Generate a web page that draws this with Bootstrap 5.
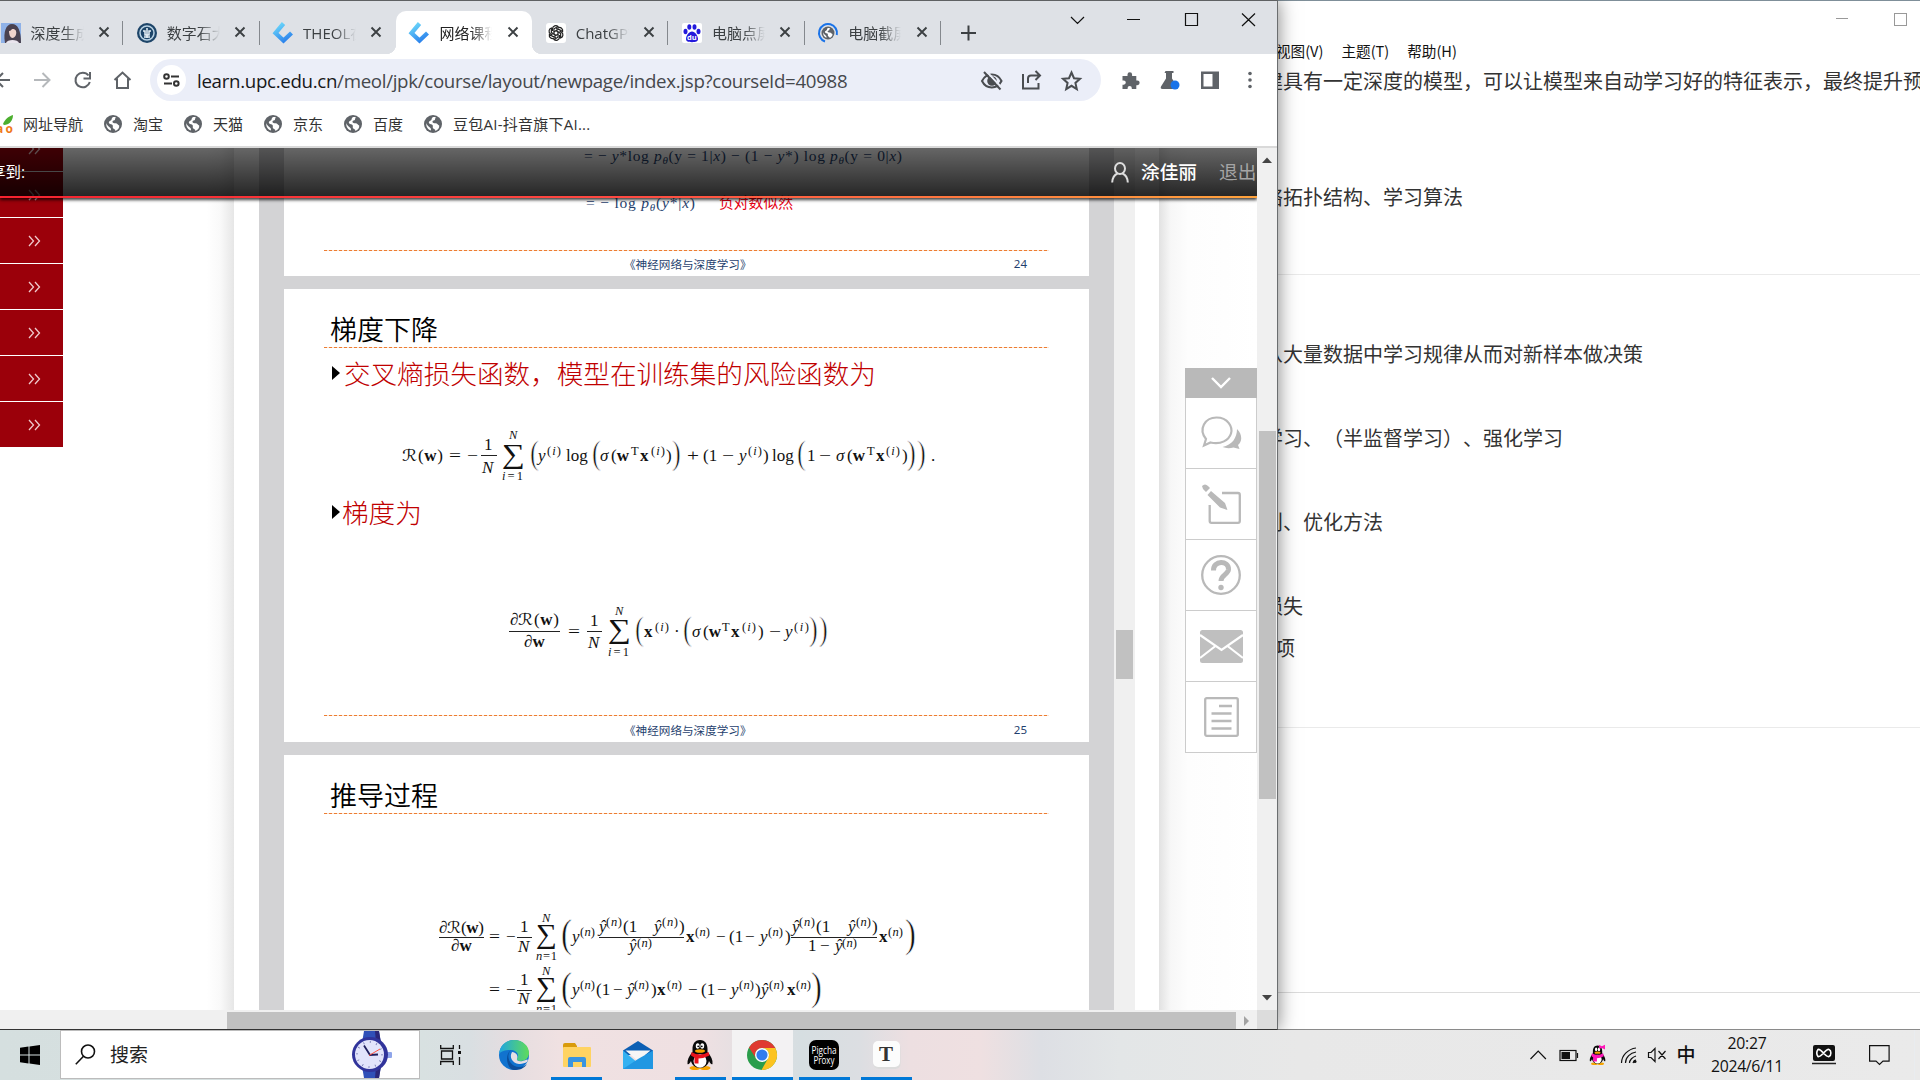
<!DOCTYPE html>
<html lang="zh-CN">
<head>
<meta charset="utf-8">
<title>网络课程</title>
<link href="https://cdn.jsdelivr.net/npm/bootstrap@5.3.0/dist/css/bootstrap.min.css" rel="stylesheet">
<style>
html,body{width:1920px;height:1080px;overflow:hidden}
body{font-family:"Open Sans","Noto Sans CJK SC",sans-serif;background:#fff;color:#333;line-height:1.2}
svg{display:block;flex:none;overflow:visible}
.desk{width:1920px;height:1030px}
/* editor window behind */
.editor{left:1262px;top:0;width:658px;height:1030px;border-top:1px solid #7f8f99;border-bottom:1px solid #8a8a8a;background:#fff}
.ed-bar{height:35px;padding:12px 13px 0 0;gap:46px}
.ed-menu{height:30px;padding-left:14px;gap:18px;font-size:14.6px;color:#111;line-height:30px;font-family:"Noto Sans CJK SC",sans-serif}
.ed-body{font:20px/30px "Noto Sans CJK SC",sans-serif;color:#333;white-space:nowrap;padding-left:1px;text-spacing-trim:space-all}
.ed-body p{margin:0 0 54px;height:30px}
.ed-rule{height:1px;background:#eaeaea}
/* browser */
.browser{left:-20px;top:0;width:1298px;height:1030px;border-top:1px solid #5f6163;border-right:1px solid #6b6e70;border-bottom:1px solid #333;background:#fff;box-shadow:0 0 18px rgba(0,0,0,.5)}
.strip{height:53px;background:#dee1e6;padding-left:7px}
.tb{width:136.3px;height:43px;padding:0 12.5px 0 13.5px;position:relative;margin-top:10px;color:#3c4043;font-size:15px}
.tb:not(.on):not(.pre)::after{content:"";position:absolute;right:0;top:10px;width:1px;height:24px;background:#84888d}
.tb.on{background:#fff;border-radius:10px 10px 0 0;color:#222}
.tb.on::before,.tb.on::after{content:"";position:absolute;bottom:0;width:10px;height:10px}
.tb.on::before{left:-10px;background:radial-gradient(circle at 0 0,transparent 10px,#fff 10.5px)}
.tb.on::after{right:-10px;background:radial-gradient(circle at 100% 0,transparent 10px,#fff 10.5px)}
.ttl{width:53px;margin-left:10px;white-space:nowrap;overflow:hidden;-webkit-mask-image:linear-gradient(90deg,#000 60%,transparent)}
.tools{height:47px;padding:5px 0 0 20px}
.omni{width:951px;height:42px;border-radius:21px;background:#ebeef8;padding:0 20px 0 7px}
.info{width:29px;height:30px;border-radius:50%;background:#fff}
.url{font:18.7px "Open Sans",sans-serif;letter-spacing:-.31px;color:#45484c;margin-left:11px;white-space:nowrap}
.url b{font-weight:400;color:#17181a}
.marks{height:47px;border-bottom:2px solid #d9d9d9;padding-left:20px;font-size:15px;color:#333;white-space:nowrap}
.marks>div{gap:11px}
/* page */
.pageport{height:862px;margin-left:20px}
.web{width:1257px;height:862px;overflow:hidden;position:relative}
.side{width:63px;margin-top:-22px}
.side div{height:46px;background:#9b000a;border-bottom:1px solid #fff;padding-left:28px}
.side div:last-child{height:45px;border:0}
.gapl{width:171px;background:linear-gradient(90deg,#fff 84%,#f9f9f9 92%,#e6e6e6)}
.gapr{width:98px;background:linear-gradient(90deg,#e2e2e2,#f7f7f7 12%,#fdfdfd 30%,#fff)}
.pdf{width:855px;background:#d3d3d5;padding:0 25px;gap:13px}
.slide{width:805px;background:#fff;flex:none;overflow:hidden}
.dash{height:2px;margin:0 40px;background:repeating-linear-gradient(90deg,#ed7d31 0 3px,#fbe3d3 3px 5px) 0 0/100% 1px no-repeat}
.foot{font:11.6px/16px "Noto Sans CJK SC",sans-serif;color:#1f3f6e;padding:0 62px 0 340px;font-weight:400}
.foot span:last-child{font:11.5px/16px "Noto Sans",sans-serif}
.h-t{font:350 27px/36px "Noto Sans CJK SC",sans-serif;color:#000;margin-left:46px;height:36px}
.bl{font:300 26.6px/32px "Noto Sans CJK SC",sans-serif;color:#c00000;margin-left:48px;gap:4px;height:32px}
.tri{width:0;height:0;border:7px solid transparent;border-left:8px solid #000;border-right:0}
.eq{fill:#111;font-family:"Liberation Serif",serif;font-size:17px}
.eq .i{font-style:italic}.eq .b{font-weight:700}.eq .s{font-size:12.5px}.eq .si{font-size:12.5px;font-style:italic}
.eq .S{font-size:27px}.eq .P{font-size:33px}.eq .Q{font-size:41px}.eq .R{font-family:"DejaVu Sans",sans-serif;font-size:16px}
.eq .P,.eq .Q{stroke:#fff;stroke-width:.7}
.eq line{stroke:#222;stroke-width:1}
.hdr{left:0;top:0;width:1257px;height:50px;background:linear-gradient(rgba(0,0,0,.6),rgba(0,0,0,.86));box-shadow:0 2px 3px rgba(0,0,0,.75);color:#fff}
.hdr::after{content:"";position:absolute;left:0;bottom:0;width:100%;height:2px;background:linear-gradient(90deg,#f5222f,#ff4a42 50%,#ffa33c)}
.scr{background:#f0f0f0}
.wid{right:0;top:220px;width:72px}
.wid .top{height:30px;background:#b9b9b9}
.wid .cl{height:71px;background:#fff;border:1px solid #ccc;border-top:0}
.hs{height:19px;background:#f0f0f0;margin-left:20px}
.hs i{display:block;width:1009px;height:17px;margin-left:227px;background:#c1c1c1}
/* taskbar */
.task{height:50px;background:linear-gradient(90deg,#d5dfdf 0,#d8e1e1 420px,#d9dfe2 470px,#e5dde0 510px,#f0e1e2 560px,#efe0e2 700px,#e0dfe2 760px,#d6dee1 800px,#dcdee2 860px,#eddfe1 910px,#efe0e1 980px,#dddfe4 1040px,#e3e6e7 1120px,#e8e8e8 1300px,#eaeaea 100%)}
.find{width:360px;height:49px;margin-left:20px;background:#fff;border:1px solid #bcbcbc;padding-left:14px;font-size:19px;color:#222}
.ap{height:50px;position:relative;flex:none}
.ap.run::after{content:"";position:absolute;left:0;right:0;bottom:0;height:3px;background:#0078d7}
.clock{font-size:15.8px;line-height:23px;color:#111;width:76px;text-align:center;letter-spacing:-.3px}
</style>
<script src="https://cdn.jsdelivr.net/npm/bootstrap@5.3.0/dist/js/bootstrap.bundle.min.js"></script>
</head>
<body>
<svg width="0" height="0" class="position-absolute"><defs>
<linearGradient id="th" gradientUnits="userSpaceOnUse" x1="4" y1="0" x2="15" y2="20"><stop offset="0" stop-color="#6fdcfb"/><stop offset="1" stop-color="#2478ea"/></linearGradient>
<g id="x"><path d="M-4.5-4.5 4.5 4.5M4.5-4.5-4.5 4.5" stroke="#3c4043" stroke-width="1.9"/></g>
<g id="globe"><circle cx="9" cy="9" r="9" fill="#5f6368"/><path d="M9 2.2c-2 .9-.7 2.600-2.300 3.300S4.500 7 5 8.200s3.200.5 3.700 2-.5 2.300.6 3.200 2.300 1 2 2.500c2.700-.7 4.300-3.300 3.900-5.400-1.200-.3-1.900-2.200-3.500-2.200S8.300 8 8.500 6.500s2.700-.8 2.500-2S12 2.600 12.600 2.800 10.300 1.600 9 2.200zM2.300 8c-.5 3.500 1.700 6.600 4.600 7.500.3-1.800-.4-2.700-1.600-3.500S2.600 9.500 2.300 8z" fill="#fff"/></g>
<g id="theol"><path d="M10.500.5 2.500 10 10.500 17.500 18.500 10" fill="none" stroke="url(#th)" stroke-width="4.300"/></g>
<g id="dc"><path d="M1 1l4.500 5L1 11M7 1l4.500 5L7 11" fill="none" stroke="#efc9cc" stroke-width="1.300"/></g>
<g id="qq"><ellipse cx="8" cy="28" rx="5.500" ry="2" fill="#f5a400"/><ellipse cx="18" cy="28" rx="5.500" ry="2" fill="#f5a400"/><path d="M13 0C7.500 0 5.500 4.500 5.500 9v3C2 16 0 20 .5 24c1 1 2.500-1 3.500-3 .8 4 4.500 7 9 7s8.200-3 9-7c1 2 2.500 4 3.500 3 .5-4-1.500-8-5-12V9c0-4.500-2-9-7.500-9z" fill="#0a0a0a"/><ellipse cx="13" cy="21" rx="6.500" ry="6.800" fill="#fff"/><ellipse cx="10.700" cy="6" rx="1.900" ry="2.800" fill="#fff"/><ellipse cx="15.300" cy="6" rx="1.900" ry="2.800" fill="#fff"/><circle cx="11.200" cy="6.300" r=".9"/><circle cx="14.800" cy="6.300" r=".9"/><ellipse cx="13" cy="11" rx="5" ry="1.800" fill="#f5a400"/></g>
</defs></svg>

<div class="desk position-relative overflow-hidden">
  <section class="editor position-absolute">
    <div class="ed-bar d-flex justify-content-end">
      <svg width="12" height="12"><path d="M0 5.500H12" stroke="#999"/></svg>
      <svg width="13" height="13"><rect x=".5" y=".5" width="12" height="12" fill="none" stroke="#999"/></svg>
    </div>
    <div class="ed-menu d-flex"><span>视图(V)</span><span>主题(T)</span><span>帮助(H)</span></div>
    <div class="ed-body">
      <p style="margin-bottom:86px">建具有一定深度的模型，可以让模型来自动学习好的特征表示，最终提升预测</p>
      <p style="margin-bottom:62px">络拓扑结构、学习算法</p>
      <div class="ed-rule"></div>
      <p style="margin-top:64px">从大量数据中学习规律从而对新样本做决策</p>
      <p>学习、（半监督学习）、强化学习</p>
      <p>则、优化方法</p>
      <p style="margin-bottom:12px">损失</p>
      <p style="margin:0 0 64px 12px">项</p>
      <div class="ed-rule"></div>
      <div class="ed-rule" style="margin-top:264px;background:#dcdcdc"></div>
    </div>
  </section>

  <section class="browser position-absolute">
    <div class="strip d-flex">
      <div class="tb d-flex align-items-center"><svg width="20" height="20"><rect width="20" height="20" fill="#8fb2e8"/><path d="M4 20C2 9 5 1 11 1s9 7 9 19z" fill="#4a4250"/><path d="M8 8c0-2 6-3 7 0s-1 7-3.500 7S8 11 8 8z" fill="#f0d3cb"/><path d="M5 20c1-4 12-4 13 0z" fill="#e9e5ee"/><path d="M8 8c2 0 3-2 4-4 1 2 3 2 4 5V3H8z" fill="#4a4250"/></svg><span class="ttl">深度生成</span><svg width="1" height="1" class="ms-auto"><use href="#x" x="-6"/></svg></div>
      <div class="tb d-flex align-items-center"><svg width="20" height="20"><circle cx="10" cy="10" r="10" fill="#1d4569"/><circle cx="10" cy="10" r="7" fill="none" stroke="#b9d2e4" stroke-width="1.500"/><path d="M6 8h2v4h4V8h2M10 5v10M7 14h6" stroke="#e9f2f8" fill="none" stroke-width="1.500"/></svg><span class="ttl">数字石大</span><svg width="1" height="1" class="ms-auto"><use href="#x" x="-6"/></svg></div>
      <div class="tb pre d-flex align-items-center"><svg width="20" height="20"><use href="#theol"/></svg><span class="ttl">THEOL在</span><svg width="1" height="1" class="ms-auto"><use href="#x" x="-6"/></svg></div>
      <div class="tb on d-flex align-items-center"><svg width="20" height="20"><use href="#theol"/></svg><span class="ttl">网络课程</span><svg width="1" height="1" class="ms-auto"><use href="#x" x="-6"/></svg></div>
      <div class="tb d-flex align-items-center"><svg width="20" height="20" viewBox="-10 -10 20 20"><rect x="-10" y="-10" width="20" height="20" rx="3" fill="#fff"/><g fill="none" stroke="#222" stroke-width="1.200"><g id="pt"><path d="M-3.500-2V-4.500a3.300 3.300 0 0 1 5.500-2L-2-4.200V1.500"/></g><use href="#pt" transform="rotate(60)"/><use href="#pt" transform="rotate(120)"/><use href="#pt" transform="rotate(180)"/><use href="#pt" transform="rotate(240)"/><use href="#pt" transform="rotate(300)"/></g></svg><span class="ttl">ChatGPT</span><svg width="1" height="1" class="ms-auto"><use href="#x" x="-6"/></svg></div>
      <div class="tb d-flex align-items-center"><svg width="20" height="20"><rect width="20" height="20" rx="2" fill="#fff"/><g fill="#2319dc"><ellipse cx="3.500" cy="8.500" rx="2" ry="2.800"/><ellipse cx="7.300" cy="4" rx="2" ry="2.800"/><ellipse cx="12.500" cy="4" rx="2" ry="2.800"/><ellipse cx="16.500" cy="8.500" rx="2" ry="2.800"/><path d="M10 8.500c3 0 6 4.500 6 7.300s-2 3.400-6 3.400-6-.6-6-3.400 3-7.300 6-7.300z"/></g><text x="5" y="17" font-size="7.500" font-weight="700" fill="#fff">du</text></svg><span class="ttl">电脑点屏</span><svg width="1" height="1" class="ms-auto"><use href="#x" x="-6"/></svg></div>
      <div class="tb d-flex align-items-center"><svg width="20" height="20"><g transform="translate(3.500 3.500) scale(.72)"><use href="#globe"/></g><path d="M7 18.500A9 9 0 1 1 18.800 12" fill="none" stroke="#1a73e8" stroke-width="2"/></svg><span class="ttl">电脑截屏</span><svg width="1" height="1" class="ms-auto"><use href="#x" x="-6"/></svg></div>
      <svg width="320" height="53" viewBox="941 1 320 53" fill="none" stroke="#111"><path d="M961 33h15M968.500 25.500v15" stroke="#3c4043" stroke-width="2"/><path d="M1071 17l6.500 6.500 6.500-6.500M1127 19.500h13M1185.500 13.500h12v12h-12zM1242 13.500l13 12.500M1255 13.500l-13 12.500" stroke-width="1.200"/></svg>
    </div>
    <div class="tools d-flex">
      <svg width="150" height="42" viewBox="0 59 150 42" fill="none" stroke="#5f6368" stroke-width="2"><path d="M10 80H-4M3 73l-7 7 7 7"/><path d="M34 80h15M42.500 73l7 7-7 7" stroke="#b5b8bb"/><path d="M88.500 75.500a7.300 7.300 0 1 0 1.300 6.500M90 72v6.500h-6.500"/><path d="M114.500 80l8-7.500 8 7.500M117 78.500v9.500h11v-9.500"/></svg>
      <div class="omni d-flex align-items-center">
        <div class="info d-flex align-items-center justify-content-center"><svg width="17" height="14" fill="none" stroke="#333" stroke-width="2"><circle cx="3.500" cy="3.500" r="2.300"/><path d="M8 3.500h8M1 10.500h8"/><circle cx="13.300" cy="10.500" r="2.300"/></svg></div>
        <div class="url"><b>learn.upc.edu.cn</b>/meol/jpk/course/layout/newpage/index.jsp?courseId=40988</div>
        <svg class="ms-auto" width="101" height="24" viewBox="981 68 101 24" fill="none" stroke="#4a4d51" stroke-width="2"><path d="M983 81c2-4 5.500-6.500 9.800-6.500s7.800 2.500 9.700 6.500c-2 4-5.500 6.500-9.700 6.500S985 85 983 81z"/><circle cx="993" cy="81" r="3.800" fill="#4a4d51"/><path d="M987.500 71.500L1003 88" stroke="#ebeef8" stroke-width="2"/><path d="M985 72l16.500 17.500"/><path d="M1024 74v14.500h15.500V83M1029 83v-4.500q0-3 3-3h7.500M1036.500 71l4.500 4.500-4.500 4.500"/><path d="M1072.500 72.500l2.500 5.700 6 .6-4.600 4.100 1.400 6.200-5.300-3.300-5.300 3.300 1.400-6.200-4.600-4.100 6-.6z"/></svg>
      </div>
      <svg width="150" height="42" viewBox="1105 59 150 42" class="ms-1" fill="#5f6368"><path d="M1123 76h4.500v-1.500a2.300 2.300 0 0 1 4.600 0V76h4.200v4.500h1a2.300 2.300 0 0 1 0 4.700h-1V89h-4.500v-1a2 2 0 0 0-4.200 0v1H1122.500v-4.300h1.200a2 2 0 0 0 0-4.200h-1.200V76z"/><path d="M1165.500 71h8v2h-1.500v5.500l5 8q1 2.500-1.500 2.500h-13q-2.500 0-1.500-2.500l5-8V73h-1.500z"/><circle cx="1175" cy="85" r="4.500" fill="#1a73e8"/><path d="M1201 71.500h18v17.500h-18zm2.500 2.500v12.500h9V74z" fill-rule="evenodd"/><circle cx="1250" cy="73.500" r="1.800"/><circle cx="1250" cy="80" r="1.800"/><circle cx="1250" cy="86.500" r="1.800"/></svg>
    </div>
    <div class="marks d-flex align-items-center">
      <div class="d-flex align-items-center" style="width:104px"><svg width="12" height="20"><path d="M0 7l3 3C5 5 9 2 13 1c0 6-4 10-9 10z" fill="#4caf2f"/><text x="-14" y="18.500" font-size="12" font-weight="700" fill="#f07818" textLength="27">hao</text></svg><span>网址导航</span></div>
      <div class="d-flex align-items-center" style="width:80px"><svg width="18" height="18"><use href="#globe"/></svg><span>淘宝</span></div>
      <div class="d-flex align-items-center" style="width:80px"><svg width="18" height="18"><use href="#globe"/></svg><span>天猫</span></div>
      <div class="d-flex align-items-center" style="width:80px"><svg width="18" height="18"><use href="#globe"/></svg><span>京东</span></div>
      <div class="d-flex align-items-center" style="width:80px"><svg width="18" height="18"><use href="#globe"/></svg><span>百度</span></div>
      <div class="d-flex align-items-center"><svg width="18" height="18"><use href="#globe"/></svg><span style="letter-spacing:.25px">豆包AI-抖音旗下AI...</span></div>
    </div>

    <div class="pageport d-flex">
      <main class="web d-flex">
        <nav class="side flex-shrink-0">
          <div class="d-flex align-items-center"><svg width="13" height="12"><use href="#dc"/></svg></div><div class="d-flex align-items-center"><svg width="13" height="12"><use href="#dc"/></svg></div><div class="d-flex align-items-center"><svg width="13" height="12"><use href="#dc"/></svg></div><div class="d-flex align-items-center"><svg width="13" height="12"><use href="#dc"/></svg></div><div class="d-flex align-items-center"><svg width="13" height="12"><use href="#dc"/></svg></div><div class="d-flex align-items-center"><svg width="13" height="12"><use href="#dc"/></svg></div><div class="d-flex align-items-center"><svg width="13" height="12"><use href="#dc"/></svg></div>
        </nav>
        <div class="gapl flex-shrink-0"></div>
        <div class="flex-shrink-0" style="width:25px"></div>
        <div class="pdf d-flex flex-column flex-shrink-0">
          <article class="slide" style="height:128px">
            <svg class="eq" width="805" height="102" viewBox="284 148 805 102" style="fill:#1f3f6e">
              <text x="584" y="161" textLength="318" font-size="15.500">= − <tspan class="i">y</tspan>*log <tspan class="i">p</tspan><tspan class="i" font-size="11" dy="3">θ</tspan><tspan dy="-3">(y = 1|</tspan><tspan class="i">x</tspan>) − (1 − <tspan class="i">y</tspan>*) log <tspan class="i">p</tspan><tspan class="i" font-size="11" dy="3">θ</tspan><tspan dy="-3">(y = 0|</tspan><tspan class="i">x</tspan>)</text>
              <text x="586" y="208" textLength="109" font-size="15.500">= − log <tspan class="i">p</tspan><tspan class="i" font-size="11" dy="3">θ</tspan><tspan dy="-3">(</tspan><tspan class="i">y</tspan>*|<tspan class="i">x</tspan>)</text>
              <text x="719" y="208" font-size="14.800" fill="#e60012" font-family="Noto Sans CJK SC">负对数似然</text>
            </svg>
            <div class="dash"></div>
            <div class="foot d-flex justify-content-between" style="padding-top:4px"><span>《神经网络与深度学习》</span><span>24</span></div>
          </article>
          <article class="slide" style="height:453px;padding-top:22px">
            <div class="h-t">梯度下降</div>
            <div class="dash"></div>
            <div class="bl d-flex align-items-center" style="margin:8px 0 1px 48px"><i class="tri"></i><span>交叉熵损失函数，模型在训练集的风险函数为</span></div>
            <svg class="eq" width="805" height="107" viewBox="284 390 805 107">
              <text class="R" x="402" y="461" textLength="15" lengthAdjust="spacingAndGlyphs">ℛ</text><text x="418" y="461" textLength="25">(<tspan class="b">w</tspan>)</text><text x="449" y="461" textLength="12" lengthAdjust="spacingAndGlyphs">=</text><text x="467" y="461" textLength="11" lengthAdjust="spacingAndGlyphs">−</text>
              <line x1="481" x2="497" y1="455.500" y2="455.500"/><text x="484" y="450">1</text><text class="i" x="482" y="472.500">N</text>
              <text class="S" x="502" y="463" textLength="23" lengthAdjust="spacingAndGlyphs">∑</text><text class="si" x="509" y="439">N</text><text class="s" x="502" y="480" textLength="21"><tspan class="i">i</tspan>=1</text>
              <text class="P" transform="translate(530 464) scale(.8 1)">(</text><text class="i" x="538" y="461">y</text><text class="s" x="547" y="455" textLength="14">(<tspan class="i">i</tspan>)</text><text x="566" y="461">log</text>
              <text class="P" transform="translate(592 464) scale(.8 1)">(</text><text class="i" x="600" y="461">σ</text><text x="611" y="461">(<tspan class="b">w</tspan></text><text class="s" x="631" y="455">T</text><text class="b" x="640" y="461">x</text><text class="s" x="651" y="455" textLength="14">(<tspan class="i">i</tspan>)</text><text x="666" y="461">)</text>
              <text class="P" transform="translate(672 464) scale(.8 1)">)</text><text x="687" y="461" textLength="12" lengthAdjust="spacingAndGlyphs">+</text><text x="703" y="461">(1</text><text x="722" y="461" textLength="12" lengthAdjust="spacingAndGlyphs">−</text><text class="i" x="739" y="461">y</text><text class="s" x="748" y="455" textLength="14">(<tspan class="i">i</tspan>)</text><text x="763" y="461">)</text><text x="772" y="461">log</text>
              <text class="P" transform="translate(797 464) scale(.8 1)">(</text><text x="807" y="461">1</text><text x="819" y="461" textLength="12" lengthAdjust="spacingAndGlyphs">−</text><text class="i" x="836" y="461">σ</text><text x="847" y="461">(<tspan class="b">w</tspan></text><text class="s" x="867" y="455">T</text><text class="b" x="876" y="461">x</text><text class="s" x="886" y="455" textLength="14">(<tspan class="i">i</tspan>)</text><text x="902" y="461">)</text>
              <text class="P" transform="translate(907 464) scale(.8 1)">)</text><text class="P" transform="translate(917 464) scale(.8 1)">)</text><text x="931" y="461">.</text>
            </svg>
            <div class="bl d-flex align-items-center" style="margin:-1px 0 1px 48px"><i class="tri"></i><span style="margin-left:-2px">梯度为</span></div>
            <svg class="eq" width="805" height="186" viewBox="284 529 805 186">
              <text x="510" y="625">∂</text><text class="R" x="518" y="625" textLength="15" lengthAdjust="spacingAndGlyphs">ℛ</text><text x="534" y="625" textLength="25">(<tspan class="b">w</tspan>)</text><line x1="509" x2="560" y1="631.500" y2="631.500"/><text x="524" y="647">∂<tspan class="b">w</tspan></text><text x="568" y="637" textLength="12" lengthAdjust="spacingAndGlyphs">=</text>
              <line x1="587" x2="602" y1="631.500" y2="631.500"/><text x="590" y="625.500">1</text><text class="i" x="588" y="648">N</text>
              <text class="S" x="608" y="638" textLength="23" lengthAdjust="spacingAndGlyphs">∑</text><text class="si" x="615" y="614.500">N</text><text class="s" x="608" y="656" textLength="21"><tspan class="i">i</tspan>=1</text>
              <text class="P" transform="translate(635 640) scale(.8 1)">(</text><text class="b" x="644" y="637">x</text><text class="s" x="655" y="631" textLength="14">(<tspan class="i">i</tspan>)</text><text x="674" y="637">·</text><text class="P" transform="translate(683 640) scale(.8 1)">(</text>
              <text class="i" x="692" y="637">σ</text><text x="703" y="637">(<tspan class="b">w</tspan></text><text class="s" x="722" y="631">T</text><text class="b" x="731" y="637">x</text><text class="s" x="742" y="631" textLength="14">(<tspan class="i">i</tspan>)</text><text x="758" y="637">)</text><text x="769" y="637" textLength="12" lengthAdjust="spacingAndGlyphs">−</text><text class="i" x="785" y="637">y</text><text class="s" x="794" y="631" textLength="15">(<tspan class="i">i</tspan>)</text>
              <text class="P" transform="translate(809 640) scale(.8 1)">)</text><text class="P" transform="translate(819 640) scale(.8 1)">)</text>
            </svg>
            <div class="dash"></div>
            <div class="foot d-flex justify-content-between" style="padding-top:5px"><span>《神经网络与深度学习》</span><span>25</span></div>
          </article>
          <article class="slide" style="height:453px;padding-top:22px">
            <div class="h-t">推导过程</div>
            <div class="dash"></div>
            <svg class="eq" width="805" height="195" viewBox="284 815 805 195">
              <text x="439" y="932.500">∂</text><text class="R" x="447" y="932.500" textLength="14" lengthAdjust="spacingAndGlyphs">ℛ</text><text x="461" y="932.500" textLength="23">(<tspan class="b">w</tspan>)</text><line x1="439" x2="484" y1="937.500" y2="937.500"/><text x="451" y="951">∂<tspan class="b">w</tspan></text><text x="489" y="942" textLength="11" lengthAdjust="spacingAndGlyphs">=</text><text x="506" y="942">−</text>
              <line x1="517" x2="532" y1="937.500" y2="937.500"/><text x="520" y="932">1</text><text class="i" x="518" y="951.500">N</text>
              <text class="S" x="536" y="943" textLength="21" lengthAdjust="spacingAndGlyphs">∑</text><text class="si" x="542" y="921.500">N</text><text class="s" x="536" y="959.500" textLength="21"><tspan class="i">n</tspan>=1</text>
              <text class="Q" transform="translate(561 947) scale(.8 1)">(</text><text class="i" x="572" y="942">y</text><text class="s" x="580" y="936" textLength="15">(<tspan class="i">n</tspan>)</text>
              <line x1="599" x2="684" y1="937.500" y2="937.500"/><text class="i" x="599" y="932">ŷ</text><text class="s" x="606" y="926" textLength="16">(<tspan class="i">n</tspan>)</text><text x="623" y="932">(1</text><text class="i" x="654" y="932">ŷ</text><text class="s" x="662" y="926" textLength="16">(<tspan class="i">n</tspan>)</text><text x="679" y="932">)</text>
              <text class="i" x="629" y="951">ŷ</text><text class="s" x="637" y="947" textLength="15">(<tspan class="i">n</tspan>)</text><text class="b" x="686" y="942">x</text><text class="s" x="695" y="936" textLength="15">(<tspan class="i">n</tspan>)</text><text x="716" y="942">−</text><text x="729" y="942">(1</text><text x="745" y="942">−</text><text class="i" x="760" y="942">y</text><text class="s" x="768" y="936" textLength="15">(<tspan class="i">n</tspan>)</text><text x="785" y="942">)</text>
              <line x1="791" x2="877" y1="937.500" y2="937.500"/><text class="i" x="792" y="932">ŷ</text><text class="s" x="799" y="926" textLength="16">(<tspan class="i">n</tspan>)</text><text x="816" y="932">(1</text><text class="i" x="848" y="932">ŷ</text><text class="s" x="856" y="926" textLength="15">(<tspan class="i">n</tspan>)</text><text x="872" y="932">)</text>
              <text x="808" y="951">1</text><text x="820" y="951">−</text><text class="i" x="835" y="951">ŷ</text><text class="s" x="842" y="947" textLength="15">(<tspan class="i">n</tspan>)</text><text class="b" x="879" y="942">x</text><text class="s" x="888" y="936" textLength="15">(<tspan class="i">n</tspan>)</text><text class="Q" transform="translate(905 947) scale(.8 1)">)</text>
              <text x="489" y="995" textLength="11" lengthAdjust="spacingAndGlyphs">=</text><text x="506" y="995">−</text><line x1="517" x2="532" y1="990.500" y2="990.500"/><text x="520" y="985">1</text><text class="i" x="518" y="1004">N</text>
              <text class="S" x="536" y="996" textLength="21" lengthAdjust="spacingAndGlyphs">∑</text><text class="si" x="542" y="975">N</text><text class="s" x="536" y="1013" textLength="21"><tspan class="i">n</tspan>=1</text>
              <text class="Q" transform="translate(561 1000) scale(.8 1)">(</text><text class="i" x="572" y="995">y</text><text class="s" x="580" y="989" textLength="15">(<tspan class="i">n</tspan>)</text><text x="596" y="995">(1</text><text x="613" y="995">−</text><text class="i" x="627" y="995">ŷ</text><text class="s" x="634" y="989" textLength="15">(<tspan class="i">n</tspan>)</text><text x="651" y="995">)</text><text class="b" x="657" y="995">x</text><text class="s" x="667" y="989" textLength="15">(<tspan class="i">n</tspan>)</text><text x="688" y="995">−</text><text x="701" y="995">(1</text><text x="717" y="995">−</text><text class="i" x="731" y="995">y</text><text class="s" x="739" y="989" textLength="15">(<tspan class="i">n</tspan>)</text><text x="755" y="995">)</text><text class="i" x="761" y="995">ŷ</text><text class="s" x="769" y="989" textLength="15">(<tspan class="i">n</tspan>)</text><text class="b" x="787" y="995">x</text><text class="s" x="796" y="989" textLength="15">(<tspan class="i">n</tspan>)</text><text class="Q" transform="translate(811 1000) scale(.8 1)">)</text>
            </svg>
          </article>
        </div>
        <div class="scr flex-shrink-0" style="width:21px;padding:482px 2px 0"><div style="height:49px;background:#c1c1c1"></div></div>
        <div class="flex-shrink-0" style="width:24px"></div>
        <div class="gapr flex-shrink-0"></div>

        <header class="hdr position-absolute d-flex align-items-center">
          <span style="font-size:15.500px;margin:-2px 0 0 -10px">享到:</span>
          <div class="ms-auto d-flex align-items-center text-nowrap" style="margin-top:-1px;width:146px;font-size:18.700px">
            <svg width="18" height="21" fill="none" stroke="#ddd" stroke-width="2"><ellipse cx="9" cy="6.500" rx="5" ry="5.500"/><path d="M1.200 20.500C1.500 15 4 12.500 6.500 11.500M16.800 20.500C16.500 15 14 12.500 11.500 11.500"/></svg>
            <span style="margin-left:12px;font-weight:500">涂佳丽</span><span style="margin-left:22px;color:#a5a5a5">退出</span>
          </div>
        </header>
        <aside class="wid position-absolute">
          <div class="top d-flex align-items-center justify-content-center"><svg width="20" height="12" fill="none" stroke="#fff" stroke-width="2.400"><path d="M1 1l9 9 9-9"/></svg></div>
          <div class="cl d-flex align-items-center justify-content-center"><svg width="41" height="34"><path d="M3 29.500l2-6.500C-3 13 4 1.500 15.500 1.500S32 11 30 17.500 20 29 9.500 26.500z" fill="none" stroke="#b9b9b9" stroke-width="2.200"/><path d="M36 13c6 6 5 13 1 16l1.500 4-6-1.500q-6 1.500-11-.5C31 29 36 22 36 13z" fill="#b9b9b9"/></svg></div>
          <div class="cl d-flex align-items-center justify-content-center"><svg width="40" height="40" fill="none" stroke="#b9b9b9"><path d="M21 9h16q1.800 0 1.800 2v26q0 1.800-1.800 1.800H10.500q-1.800 0-1.800-1.800V21" stroke-width="2.300"/><path d="M1 2q3-3 6 0l2 2-4 4-3-3z M10 7l14 12 2.500 7-7.500-2.500L6.500 11z" fill="#b9b9b9" stroke="none"/></svg></div>
          <div class="cl d-flex align-items-center justify-content-center"><svg width="40" height="40" fill="none" stroke="#b9b9b9"><circle cx="20" cy="20" r="18.800" stroke-width="2.300"/><path d="M12.500 15.500C12 5 28 5 27.500 14.500 27 19.500 20 20 20 26" stroke-width="5"/><circle cx="20" cy="32.500" r="2.700" fill="#b9b9b9" stroke="none"/></svg></div>
          <div class="cl d-flex align-items-center justify-content-center"><svg width="43" height="33"><rect width="43" height="33" rx="2.500" fill="#bfbfbf"/><path d="M0 5l21.500 15L43 5M0 28l15.500-12M43 28L27.500 16" stroke="#fff" stroke-width="2.200" fill="none"/></svg></div>
          <div class="cl d-flex align-items-center justify-content-center"><svg width="35" height="40" fill="none" stroke="#b9b9b9" stroke-width="2.300"><rect x="1.200" y="1.200" width="32.600" height="37.600" rx="1.500"/><path d="M15 9h13M7.500 16.500h20M7.500 24h20M7.500 31.500h20"/></svg></div>
        </aside>
      </main>
      <div class="scr d-flex flex-column align-items-center" style="width:20px;padding-top:9px">
        <svg width="10" height="6"><path d="M0 6l5-5.500L10 6z" fill="#444"/></svg>
        <div style="width:17px;height:368px;margin-top:268px;background:#c1c1c1"></div>
        <svg width="10" height="6" style="margin-top:196px"><path d="M0 0h10L5 5.500z" fill="#444"/></svg>
      </div>
    </div>
    <div class="hs d-flex align-items-end"><i></i><svg width="21" height="17"><path d="M8 4l5 5-5 5z" fill="#a3a3a3"/></svg><div class="h-100 flex-fill" style="background:#dcdcdc"></div></div>
  </section>
</div>

<footer class="task d-flex align-items-center">
  <svg width="20" height="20" style="margin-left:20px"><path d="M0 2.800L8.500 1.600V9.500H0zM9.500 1.500L20 0v9.500H9.500zM0 10.500h8.500v7.900L0 17.200zM9.500 10.500H20V20L9.500 18.500z"/></svg>
  <div class="find d-flex align-items-center align-self-start"><svg width="21" height="21" fill="none" stroke="#111" stroke-width="1.600"><circle cx="13" cy="7.500" r="6.500"/><path d="M8.500 12.300L.8 20.200"/></svg><span style="margin-left:14px;padding-top:2px">搜索</span>
    <svg width="40" height="47" class="ms-auto" style="margin-right:27px"><path d="M12 0h15l2 12H10zM10 35h19l-2 12H12z" fill="#3050b8"/><path d="M23 0h4l2 12h-5zM24 35h5l-2 12h-4z" fill="#2b2779"/><rect x="34" y="21" width="6" height="6" rx="1" fill="#8fa5ea"/><ellipse cx="18" cy="23.500" rx="18" ry="17.500" fill="#31349b"/><ellipse cx="17.500" cy="23.500" rx="14.500" ry="14.500" fill="#e2e4fb"/><circle cx="17.500" cy="23.500" r="12.500" fill="none" stroke="#6d72ac" stroke-width="2" stroke-dasharray=".8 5.745"/><path d="M12 14.500l6 9.500 8-.5" fill="none" stroke="#20205e" stroke-width="1.800"/><path d="M17 24.500L28 18" stroke="#ff5340"/></svg></div>
  <svg width="21" height="20" style="margin-left:20px" fill="none" stroke="#111" stroke-width="1.300"><path d="M.7 0v3.500h12.600V0M.7 20v-3.500h12.600V20M1.500 6h11v8h-11zM19.500 0v4M19.500 12v8"/><path d="M18 6h3v3h-3z" fill="#111" stroke="none"/></svg>
  <svg width="30" height="30" viewBox="0 0 30 30" style="margin-left:38px"><defs><linearGradient id="eg"><stop stop-color="#20a5e0"/><stop offset="1" stop-color="#5fdc5a"/></linearGradient></defs><circle cx="15" cy="15" r="15" fill="#1173cf"/><path d="M0 14C1 5 7 0 15 0c9 0 15 6 15 13 0 5-4 8-8 8-3 0-5-1-4-2.500 3-4-1-8.500-6-8.500-5 0-10 1-12 4z" fill="url(#eg)"/><path d="M12 10c-6 6-1 17 8 17 4 0 6-1 8-3-3 5-8 6-13 6C8 29 5 15 12 10z" fill="#0c4f9c"/><path d="M13 12c-3 5 0 11 7 12 3 .3 6-1 8-2 1-1.500 1-3 0-2.500-6 3-11 2-10-1 1.500-3-1-6-5-6.500z" fill="#e6dfe4"/></svg>
  <div class="ap run d-flex align-items-center justify-content-center" style="width:51px;margin-left:22px"><svg width="28" height="24"><path d="M0 2q0-2 2-2h10l2 3v6H0z" fill="#d99b0c"/><rect y="4" width="28" height="20" rx="1" fill="#ffd362"/><path d="M5 24v-8q0-2 2-2h14q2 0 2 2v8h-4v-5h-9v5z" fill="#3a94e0"/></svg></div>
  <svg width="30" height="28" style="margin-left:21px"><path d="M0 9.500L15 0l15 9.500V14H0z" fill="#0c5fb4"/><path d="M2.500 9.500h25L15 20z" fill="#f6f6f6"/><path d="M0 9.500L22 28H0z" fill="#35b1f1"/><path d="M30 9.500V28H0L15 18z" fill="#2197e2"/></svg>
  <div class="ap run d-flex align-items-center justify-content-center" style="width:51px;margin-left:22px"><svg width="26" height="30" style="margin-right:2px"><use href="#qq"/><path d="M4.500 12q8.500 5 17 0l1 3.500q-6 3-11 3v5H7.500v-6L4 15.500z" fill="#e8131c"/></svg></div>
  <div class="ap run d-flex align-items-center justify-content-center" style="width:61px;margin-left:6px;background:#f3f2f3"><svg width="30" height="30" viewBox="-15 -15 30 30" style="margin-right:1px"><circle r="15" fill="#2a9d4b"/><path d="M-13-7.500A15 15 0 0 1 13-7.500L13.500-7H0A7 7 0 0 0-6 3.500z" fill="#df3b30"/><path d="M13-7.500A15 15 0 0 1-.5 15L6 3.500A7 7 0 0 0 0-7H13z" fill="#fcc31f"/><circle r="7" fill="#fff"/><circle r="5.600" fill="#2f7cee"/></svg></div>
  <div class="ap run d-flex align-items-center justify-content-center" style="width:51px;margin-left:6px"><svg width="30" height="30" style="margin-right:1px"><rect width="30" height="30" rx="7" fill="#000"/><text x="2.500" y="13.500" font-size="10" fill="#fff" textLength="25" lengthAdjust="spacingAndGlyphs">Pigcha</text><text x="4.500" y="24" font-size="10" fill="#fff" textLength="21" lengthAdjust="spacingAndGlyphs">Proxy</text></svg></div>
  <div class="ap run d-flex align-items-center justify-content-center" style="width:51px;margin-left:11px"><svg width="27" height="28"><rect x=".5" y="2" width="27" height="26" rx="5" fill="#dcdcdc"/><rect width="27" height="26" rx="5" fill="#fcfcfc"/><text x="6" y="20" font-size="21" font-weight="700" fill="#333" font-family="Liberation Serif" textLength="14.500">T</text></svg></div>
  <div class="ms-auto d-flex align-items-center h-100" style="width:390px">
    <svg width="170" height="50" viewBox="1530 1030 170 50" fill="none" stroke="#111" stroke-width="1.200"><path d="M1530.500 1059l7.700-8 7.700 8"/><rect x="1560" y="1050.500" width="16" height="10"/><path d="M1577.500 1053v5"/><rect x="1561.500" y="1052" width="8.500" height="7" fill="#111" stroke="none"/><g stroke="none" transform="translate(1589.500 1045.500) scale(.62 .65)"><use href="#qq"/><path d="M4 12q9 5 18 0l1 4.500q-6 3-11 3v5H6v-6L3 16z" fill="#ff17b8"/><path d="M15-1l5 2 5-2v7l-5-2-4 1z" fill="#ff17b8"/></g><path d="M1621.500 1063c0-8 7-14 14.500-15M1625.500 1063c0-6 5-10 10.500-11M1629.500 1063c0-3 3-6 6.500-7M1633 1063q1-3 3-3"/><circle cx="1635" cy="1061.500" r="1.500" fill="#111" stroke="none"/><path d="M1648.500 1052.500h2.500l4-4v13l-4-4h-2.500zM1658.500 1051l7 8M1665.500 1051l-7 8"/><text x="1676.500" y="1062" font-size="19" fill="#111" stroke="none" font-family="Noto Sans CJK SC" font-weight="500">中</text></svg>
    <div class="clock" style="margin-left:9px">20:27<br>2024/6/11</div>
    <svg width="24" height="20" style="margin-left:27px"><rect x="1" width="22" height="16" rx="2" fill="#111"/><path d="M6 4.500Q3.500 8 6 11.500C9 13 14 3 17 4.500c2.500 1 2.500 6 0 7C14 13 9 3 6 4.500z" fill="none" stroke="#fff" stroke-width="1.600" stroke-linejoin="round"/><path d="M0 18.500h24" stroke="#222" stroke-width="1.500"/></svg>
    <svg width="21" height="20" style="margin-left:33px" fill="none" stroke="#111" stroke-width="1.200"><path d="M.6.600h19.500v15.500H14l-3.500 3.400L7 16.100H.6z"/></svg>
    <div class="h-100 border-start border-secondary-subtle" style="margin-left:24px"></div>
  </div>
</footer>
</body>
</html>
